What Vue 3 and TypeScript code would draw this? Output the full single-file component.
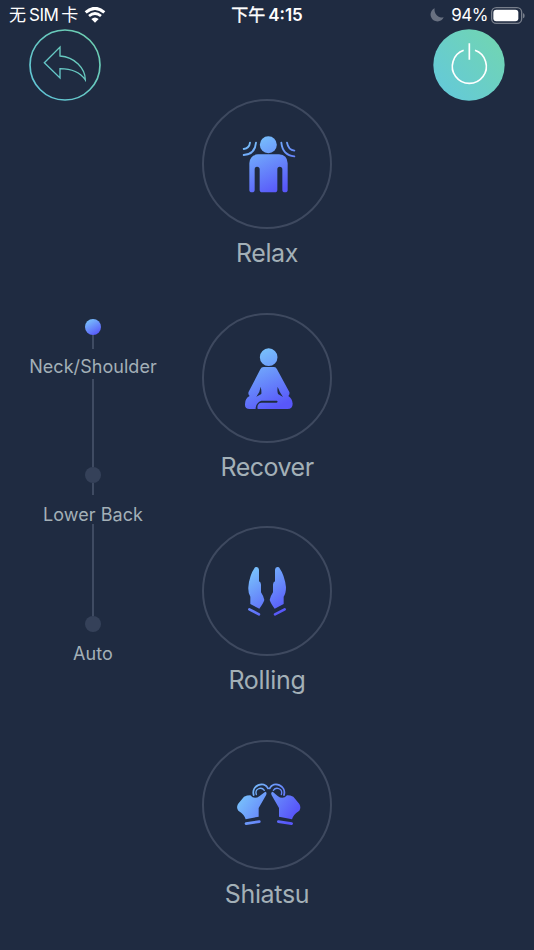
<script setup lang="ts">
interface Shape {
  d: string
  stroke?: number
}
interface Mode {
  id: string
  label: string
  spacing: number
  gradient: [number, number, number, number]
  shapes: Shape[]
}
interface Step {
  id: string
  label: string
  active: boolean
}

const modes: Mode[] = [
  {
    id: 'relax',
    label: 'Relax',
    spacing: -0.4,
    gradient: [85, 50, 160, 200],
    shapes: [
      { d: 'M124 37a25.500 25.500 0 1 1 0 51a25.500 25.500 0 1 1 0-51z' },
      { d: 'M93 91H156Q181 92 182 118V198Q182 205 174 205Q166 205 166 198V136Q166 128 158 128Q151 128 151 136V197Q151 205 143 205H106Q98 205 98 197V136Q98 128 90 128Q83 128 83 136V198Q83 205 75 205Q67 205 67 198V118Q68 93 93 91Z' },
      { d: 'M69 56Q67 73 50 75M87 56Q84 91 50 93M180 56Q184 78 202 80M163 56Q167 94 202 97', stroke: 5.5 },
    ],
  },
  {
    id: 'recover',
    label: 'Recover',
    spacing: -0.5,
    gradient: [85, 50, 155, 205],
    shapes: [
      { d: 'M125 31a26.500 26.500 0 1 1 0 53a26.500 26.500 0 1 1 0-53z' },
      { d: 'M110 87H141Q147 87 150 94L187 162Q189 168 184 174Q196 182 197 197Q197 213 181 213H92Q89 202 97 196L103 194H149Q154 192 150 188H103Q96 190 92 196Q85 202 86 213H68Q54 213 54 201Q53 181 68 174Q62 168 65 161L100 94Q103 87 110 87ZM101 146Q99 163 88 176L103 168Q104 158 101 146ZM152 146Q150 160 153 168L168 177Q158 164 152 146Z' },
    ],
  },
  {
    id: 'rolling',
    label: 'Rolling',
    spacing: -0.25,
    gradient: [75, 65, 160, 185],
    shapes: [
      { d: 'M84 49Q95 45 96 56V91Q102 93 102 101V124Q109 134 112 147Q109 157 97 173L70 159V137Q63 127 64 109Q67 73 84 49Z' },
      { d: 'M156 49Q145 45 144 56V91Q138 93 138 101V124Q131 134 128 147Q131 157 143 173L170 159V137Q177 127 177 109Q173 73 156 49Z' },
      { d: 'M67 175L96 190M173 175L144 190', stroke: 7.5 },
    ],
  },
  {
    id: 'shiatsu',
    label: 'Shiatsu',
    spacing: -0.35,
    gradient: [55, 85, 180, 175],
    shapes: [
      { d: 'M51 95Q60 91 70 91Q82 105 98 93L115 80Q121 82 117 91L95 129V155L56 163Q53 149 34 137Q27 128 33 117Z' },
      { d: 'M199 95Q190 91 180 91Q168 105 152 93L137 80Q130 82 134 91L156 129V155L195 163Q198 149 217 137Q223 128 217 117Z' },
      { d: 'M57 176L97 170M154 170L194 176', stroke: 8 },
      { d: 'M80 90C72 62 111 46 123 70M171 90C179 62 140 46 128 70', stroke: 5.5 },
      { d: 'M88 89C82 70 104 65 112 76M163 89C169 70 147 65 139 76', stroke: 4 },
    ],
  },
]

const steps: Step[] = [
  { id: 'neck', label: 'Neck/Shoulder', active: true },
  { id: 'back', label: 'Lower Back', active: false },
  { id: 'auto', label: 'Auto', active: false },
]
</script>

<template>
  <div class="screen">
    <div class="status">
      <div class="carrier">
        <span class="carrier-name">无<span class="sim">SIM</span>卡</span>
        <svg class="wifi" viewBox="0 0 66 48">
          <path d="M5 16Q33-8 61 16" fill="none" stroke="#fff" stroke-width="9" />
          <path d="M15 27Q33 12 51 27" fill="none" stroke="#fff" stroke-width="8" />
          <path d="M22 36Q33 27 44 36L33 47Z" fill="#fff" />
        </svg>
      </div>
      <div class="clock"><span class="period">下午</span>4:15</div>
      <div class="power-state">
        <svg class="moon" viewBox="0 0 42 42">
          <path d="M14 1A20.500 20.500 0 1 0 41 28A23 23 0 0 1 14 1Z" fill="#687080" />
        </svg>
        <span class="percent">94%</span>
        <svg class="battery" viewBox="0 0 102 51">
          <rect x="2" y="2" width="90" height="47" rx="14" fill="none" stroke="#777e8b" stroke-width="4" />
          <rect x="7" y="8" width="75" height="35" rx="9" fill="#fff" />
          <path d="M96 18Q101 20 101 26Q101 32 96 34Z" fill="#777e8b" />
        </svg>
      </div>
    </div>

    <div class="actions">
      <button class="round" aria-label="Back">
        <svg viewBox="0 0 216 216">
          <defs>
            <linearGradient id="teal" x1="0" y1="216" x2="216" y2="0" gradientUnits="userSpaceOnUse">
              <stop offset=".1" stop-color="#60c4d6" />
              <stop offset=".9" stop-color="#6dceb0" />
            </linearGradient>
          </defs>
          <circle cx="108" cy="108" r="105" fill="none" stroke="url(#teal)" stroke-width="5" />
          <path d="M46 101L93 54V81C137 84 169 118 169 153C151 126 125 119 93 119V147Z" fill="none" stroke="url(#teal)" stroke-width="4" />
        </svg>
      </button>
      <button class="round" aria-label="Power">
        <svg viewBox="0 0 216 216">
          <defs>
            <linearGradient id="power" x1="30" y1="180" x2="186" y2="36" gradientUnits="userSpaceOnUse">
              <stop offset="0" stop-color="#65cad6" />
              <stop offset="1" stop-color="#70d4b5" />
            </linearGradient>
          </defs>
          <circle cx="108" cy="108" r="107" fill="url(#power)" />
          <path d="M92 64A51 51 0 1 0 126 64M109 43V92" fill="none" stroke="#fff" stroke-width="5" />
        </svg>
      </button>
    </div>

    <div class="content">
      <div class="steps">
        <div v-for="s in steps" :key="s.id" class="step" :class="s.id">
          <span class="dot" :class="{ active: s.active }"></span>
          <span class="stem"></span>
          <span class="step-label">{{ s.label }}</span>
          <span class="link"></span>
        </div>
      </div>
      <div class="modes">
        <div v-for="m in modes" :key="m.id" class="mode">
          <div class="ring">
            <svg class="icon" viewBox="0 0 240 240">
              <defs>
                <linearGradient
                  :id="m.id"
                  :x1="m.gradient[0]"
                  :y1="m.gradient[1]"
                  :x2="m.gradient[2]"
                  :y2="m.gradient[3]"
                  gradientUnits="userSpaceOnUse"
                >
                  <stop offset="0" stop-color="#77bdfb" />
                  <stop offset="1" stop-color="#5857fa" />
                </linearGradient>
              </defs>
              <path
                v-for="(p, i) in m.shapes"
                :key="i"
                :d="p.d"
                fill-rule="evenodd"
                stroke-linecap="round"
                :fill="p.stroke ? 'none' : `url(#${m.id})`"
                :stroke="p.stroke ? `url(#${m.id})` : 'none'"
                :stroke-width="p.stroke ?? 0"
              />
            </svg>
          </div>
          <div class="mode-label" :style="{ letterSpacing: m.spacing + 'px' }">{{ m.label }}</div>
        </div>
      </div>
    </div>
  </div>
</template>

<style>
body {
  background: #1f2b41;
}
</style>

<style scoped>
.screen {
  width: 534px;
  height: 950px;
  overflow: hidden;
  background: #1f2b41;
  color: #a3b0b7;
  font-family: Inter, 'Noto Sans CJK SC', sans-serif;
}
.status {
  display: grid;
  grid-template-columns: 1fr auto 1fr;
  align-items: center;
  box-sizing: border-box;
  height: 29px;
  padding: 1px 9px 0 9px;
  color: #fff;
  font-size: 17px;
  line-height: 28px;
}
.carrier,
.power-state {
  display: flex;
  align-items: center;
}
.carrier {
  gap: 6px;
}
.carrier-name {
  white-space: nowrap;
}
.sim {
  margin: 0 3px;
  letter-spacing: -0.5px;
}
.wifi {
  width: 22px;
  height: 16px;
}
.clock {
  font-weight: 600;
}
.period {
  margin-right: 3px;
  font-weight: 400;
  -webkit-text-stroke: 0.4px #fff;
}
.power-state {
  justify-content: flex-end;
}
.moon {
  width: 14px;
  height: 14px;
  margin-right: 7px;
}
.percent {
  margin-right: 3px;
  letter-spacing: -0.5px;
}
.battery {
  width: 34px;
  height: 17px;
}
.actions {
  display: flex;
  justify-content: space-between;
  height: 70px;
  padding: 0 29px;
}
.round {
  flex: none;
  width: 72px;
  height: 72px;
  padding: 0;
  border: 0;
  background: none;
}
.round svg {
  display: block;
  width: 72px;
  height: 72px;
}
.content {
  display: grid;
  grid-template-columns: 186px 162px 186px;
}
.steps {
  display: flex;
  flex-direction: column;
  padding-top: 220px;
}
.step {
  display: flex;
  flex-direction: column;
  align-items: center;
}
.dot {
  width: 16px;
  height: 16px;
  border-radius: 50%;
  background: #354159;
}
.dot.active {
  background: linear-gradient(150deg, #78c0fb 10%, #5857fa 90%);
}
.stem,
.link {
  width: 2px;
  background: #3f4b62;
}
.stem {
  height: 14px;
}
.step-label {
  height: 30px;
  box-sizing: border-box;
  padding-top: 6px;
  font-size: 18px;
  line-height: 24px;
  letter-spacing: 0.05px;
  white-space: nowrap;
}
.link {
  height: 88px;
}
.back .stem {
  height: 12px;
}
.back .step-label {
  height: 29px;
  padding-top: 8px;
}
.back .link {
  height: 92px;
}
.auto .stem,
.auto .link {
  display: none;
}
.auto .step-label {
  padding-top: 10px;
}
.modes {
  display: flex;
  flex-direction: column;
  align-items: center;
}
.mode {
  height: 213.600px;
  text-align: center;
}
.ring {
  display: flex;
  align-items: center;
  justify-content: center;
  box-sizing: border-box;
  width: 130px;
  height: 130px;
  border: 2px solid #3e495f;
  border-radius: 50%;
}
.icon {
  width: 80px;
  height: 80px;
}
.mode-label {
  margin-top: 8px;
  font-size: 25px;
  line-height: 32px;
}
</style>
